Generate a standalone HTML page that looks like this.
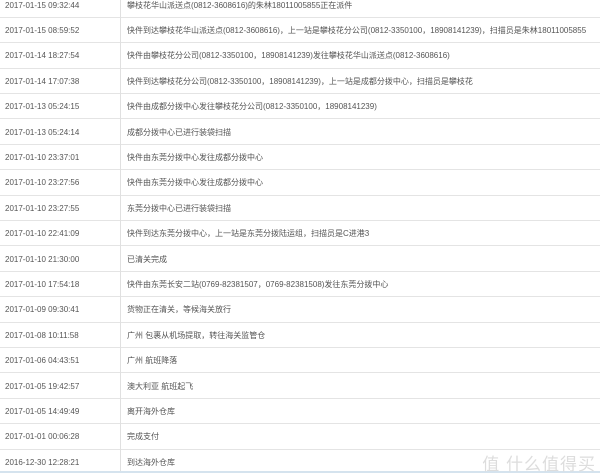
<!DOCTYPE html><html><head><meta charset="utf-8"><style>
body{margin:0;width:600px;height:473px;overflow:hidden;background:#fff;font-family:"Liberation Sans","Noto Sans CJK SC",sans-serif;font-size:8px;color:#555;position:relative}
.r{position:absolute;left:0;width:600px;height:25.4px;border-bottom:1px solid #e4e4e4;box-sizing:border-box}
.r span{position:absolute;top:0;line-height:25px;white-space:nowrap}
.t{left:5px}.d{left:127px}
.v{position:absolute;left:120px;top:0;width:1px;height:471px;background:#e0e0e0}
.b{position:absolute;left:0;top:471px;width:600px;height:2px;background:#d5e3ee}
.w{position:absolute;right:4px;top:450px;font-size:17px;color:#ddd;letter-spacing:1px}
</style></head><body>
<div class="r" style="top:-7.5px"><span class="t">2017-01-15 09:32:44</span><span class="d">攀枝花华山派送点(0812-3608616)的朱林18011005855正在派件</span></div>
<div class="r" style="top:17.9px"><span class="t">2017-01-15 08:59:52</span><span class="d">快件到达攀枝花华山派送点(0812-3608616)，上一站是攀枝花分公司(0812-3350100，18908141239)，扫描员是朱林18011005855</span></div>
<div class="r" style="top:43.3px"><span class="t">2017-01-14 18:27:54</span><span class="d">快件由攀枝花分公司(0812-3350100，18908141239)发往攀枝花华山派送点(0812-3608616)</span></div>
<div class="r" style="top:68.7px"><span class="t">2017-01-14 17:07:38</span><span class="d">快件到达攀枝花分公司(0812-3350100，18908141239)，上一站是成都分拨中心，扫描员是攀枝花</span></div>
<div class="r" style="top:94.1px"><span class="t">2017-01-13 05:24:15</span><span class="d">快件由成都分拨中心发往攀枝花分公司(0812-3350100，18908141239)</span></div>
<div class="r" style="top:119.5px"><span class="t">2017-01-13 05:24:14</span><span class="d">成都分拨中心已进行装袋扫描</span></div>
<div class="r" style="top:144.9px"><span class="t">2017-01-10 23:37:01</span><span class="d">快件由东莞分拨中心发往成都分拨中心</span></div>
<div class="r" style="top:170.3px"><span class="t">2017-01-10 23:27:56</span><span class="d">快件由东莞分拨中心发往成都分拨中心</span></div>
<div class="r" style="top:195.7px"><span class="t">2017-01-10 23:27:55</span><span class="d">东莞分拨中心已进行装袋扫描</span></div>
<div class="r" style="top:221.1px"><span class="t">2017-01-10 22:41:09</span><span class="d">快件到达东莞分拨中心，上一站是东莞分拨陆运组，扫描员是C进港3</span></div>
<div class="r" style="top:246.5px"><span class="t">2017-01-10 21:30:00</span><span class="d">已清关完成</span></div>
<div class="r" style="top:271.9px"><span class="t">2017-01-10 17:54:18</span><span class="d">快件由东莞长安二站(0769-82381507，0769-82381508)发往东莞分拨中心</span></div>
<div class="r" style="top:297.3px"><span class="t">2017-01-09 09:30:41</span><span class="d">货物正在清关，等候海关放行</span></div>
<div class="r" style="top:322.7px"><span class="t">2017-01-08 10:11:58</span><span class="d">广州 包裹从机场提取，转往海关监管仓</span></div>
<div class="r" style="top:348.1px"><span class="t">2017-01-06 04:43:51</span><span class="d">广州 航班降落</span></div>
<div class="r" style="top:373.5px"><span class="t">2017-01-05 19:42:57</span><span class="d">澳大利亚 航班起飞</span></div>
<div class="r" style="top:398.9px"><span class="t">2017-01-05 14:49:49</span><span class="d">离开海外仓库</span></div>
<div class="r" style="top:424.3px"><span class="t">2017-01-01 00:06:28</span><span class="d">完成支付</span></div>
<div class="r" style="top:449.7px;border-bottom:none"><span class="t">2016-12-30 12:28:21</span><span class="d">到达海外仓库</span></div>
<div class="v"></div><div class="b"></div>
<div class="w">值 什么值得买</div>
</body></html>
